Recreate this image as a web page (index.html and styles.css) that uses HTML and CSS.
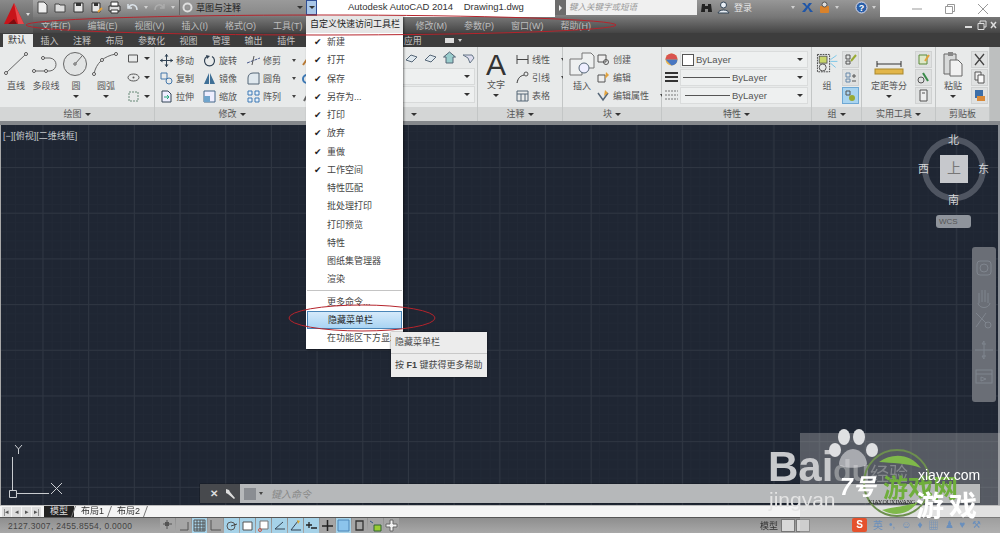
FILE: index.html
```html
<!DOCTYPE html>
<html lang="zh">
<head>
<meta charset="utf-8">
<title>Autodesk AutoCAD 2014</title>
<link rel="stylesheet" href="styles.css">
</head>
<body>
<div class="app">
  <div class="logo">
    <svg width="33" height="33" viewBox="0 0 33 33"><path d="M14 3 4 24h4l6-4 3 4h7z" fill="#c8141a"/><path d="M14 3l4 21h6z" fill="#e8474a"/><path d="M8 24l6-5 3 5z" fill="#7e0b0f"/><path d="M26 13h4l-2 3z" fill="#ddd"/></svg>
  </div>
  <div class="top-stack">
    <header class="titlebar">
      <div class="qat">
        <svg class="ic" viewBox="0 0 13 13"><path d="M2 1h6l3 3v8H2z" fill="#eee" stroke="#444"/></svg>
        <svg class="ic" viewBox="0 0 13 13"><path d="M1 3h4l1 1h5v7H1z" fill="#ddd" stroke="#444"/></svg>
        <svg class="ic" viewBox="0 0 13 13"><path d="M2 2h9v9H2z" fill="#e6e6e6" stroke="#333"/><path d="M4 2h5v3H4z" fill="#333"/></svg>
        <svg class="ic" viewBox="0 0 13 13"><path d="M2 2h8v9H2z" fill="#e6e6e6" stroke="#333"/><path d="M4 2h4v3H4z" fill="#333"/><path d="M8 11l4-4" stroke="#e3a23a" stroke-width="2"/></svg>
        <svg class="ic" viewBox="0 0 13 13"><path d="M1 5h11v5H1z" fill="#ddd" stroke="#333"/><path d="M3 1h7v4H3zM3 9h7v3H3z" fill="#fff" stroke="#333"/></svg>
        <svg class="ic" viewBox="0 0 13 13"><path d="M3 6c3-4 8-2 8 3M2 3v4h4" fill="none" stroke="#dbe3ea" stroke-width="1.500"/></svg>
        <i class="tiny-arrow"></i>
        <svg class="ic dim" viewBox="0 0 13 13"><path d="M10 6C7 2 2 4 2 9M11 3v4H7" fill="none" stroke="#bbb" stroke-width="1.500"/></svg>
        <i class="tiny-arrow"></i>
        <div class="workspace">
          <svg class="ic" viewBox="0 0 13 13"><circle cx="6.500" cy="6.500" r="4" fill="none" stroke="#ddd" stroke-width="2"/><circle cx="6.500" cy="6.500" r="1.500" fill="#999"/></svg>
          <span>草图与注释</span>
          <i class="drop dark"></i>
        </div>
        <div class="qat-more"><i class="drop dark"></i></div>
      </div>
      <div class="app-title">Autodesk AutoCAD 2014&nbsp;&nbsp;&nbsp;&nbsp;Drawing1.dwg</div>
      <div class="search-arrow"><i class="side-arrow"></i></div>
      <div class="search">键入关键字或短语</div>
      <div class="infocenter">
        <svg class="ic" viewBox="0 0 13 13"><path d="M2 3h3v8H1zM8 3h3l1 8H8zM5 5h3v3H5z" fill="#222"/></svg>
        <svg class="ic" viewBox="0 0 13 13"><circle cx="6.500" cy="4" r="3" fill="#e8eef5" stroke="#345"/><path d="M1 12c1-4 10-4 11 0z" fill="#e8eef5" stroke="#345"/></svg>
        <span class="login">登录</span>
        <i class="tiny-arrow push"></i>
        <svg class="ic" viewBox="0 0 13 13"><path d="M1 2l4 4-4 5h3l3-4 2 4h3L8 6l3-4H8L6 5 4 2z" fill="#1f56a8"/></svg>
        <svg class="ic" viewBox="0 0 13 13"><rect x="2" y="5" width="9" height="7" rx="1" fill="#d9822b"/><circle cx="6.500" cy="3.500" r="2.500" fill="#ddd" stroke="#555"/></svg>
        <i class="tiny-arrow"></i>
        <svg class="ic help" viewBox="0 0 13 13"><circle cx="6.500" cy="6.500" r="5.500" fill="#2a5fa8" stroke="#dde"/><text x="6.500" y="10" font-size="9" text-anchor="middle" fill="#fff" font-family="Liberation Sans" font-weight="700">?</text></svg>
        <i class="tiny-arrow"></i>
      </div>
      <div class="win-controls">
        <svg width="12" height="12" viewBox="0 0 12 12"><path d="M1 6h10" stroke="#999"/></svg>
        <svg width="12" height="12" viewBox="0 0 12 12"><path d="M1.500 3.500h7v7h-7zM3.500 3V1.500h7v7H9" fill="none" stroke="#999"/></svg>
        <svg width="12" height="12" viewBox="0 0 12 12"><path d="M1 1l10 10M11 1 1 11" stroke="#999"/></svg>
      </div>
    </header>
    <nav class="menubar">
      <span>文件(F)</span><span>编辑(E)</span><span>视图(V)</span><span>插入(I)</span><span>格式(O)</span><span>工具(T)</span><span class="menu-after-gap">修改(M)</span><span>参数(P)</span><span>窗口(W)</span><span>帮助(H)</span>
      <div class="doc-controls">
        <svg width="32" height="10" viewBox="0 0 32 10"><path d="M0 7h7" stroke="#ddd" stroke-width="2"/><path d="M13 3.500h6v6h-6zM15 3V1h6v6h-2" fill="none" stroke="#ddd"/><path d="M26 2l5 6M31 2l-5 6" stroke="#ddd" stroke-width="1.500"/></svg>
      </div>
    </nav>
  </div>
</div>
<div class="tabs">
  <span class="tab active">默认</span><span class="tab">插入</span><span class="tab">注释</span><span class="tab">布局</span><span class="tab">参数化</span><span class="tab">视图</span><span class="tab">管理</span><span class="tab">输出</span><span class="tab">插件</span><span class="tab tab-after-gap">应用</span>
  <span class="tab-icon"></span><i class="tiny-arrow"></i>
</div>
<section class="ribbon">
  <div class="panel p-draw">
    <div class="panel-body draw-body">
      <div class="big"><svg class="big-ic" viewBox="0 0 30 26"><path d="M5 22 25 3" stroke="#666" fill="none"/><circle cx="5" cy="22" r="1.500" fill="#fff" stroke="#555"/><circle cx="25" cy="3" r="1.500" fill="#fff" stroke="#555"/></svg><span>直线</span></div>
      <div class="big"><svg class="big-ic" viewBox="0 0 30 26"><path d="M3 20h16c8-1 8-12 0-13h-7" stroke="#666" fill="none"/><circle cx="3" cy="20" r="1.500" fill="#fff" stroke="#555"/><circle cx="15" cy="20" r="1.500" fill="#fff" stroke="#555"/><circle cx="12" cy="7" r="1.500" fill="#fff" stroke="#555"/></svg><span>多段线</span></div>
      <div class="big"><svg class="big-ic" viewBox="0 0 30 26"><circle cx="14" cy="13" r="11.500" fill="#e2e4e4" stroke="#666"/><path d="M14 13l7-8" stroke="#666"/><circle cx="14" cy="13" r="1.200" fill="#fff" stroke="#555"/></svg><span>圆</span><i class="drop dark"></i></div>
      <div class="big"><svg class="big-ic" viewBox="0 0 30 26"><path d="M3 23C5 12 13 5 25 3" stroke="#666" fill="none"/><circle cx="3" cy="23" r="1.500" fill="#fff" stroke="#555"/><circle cx="11" cy="9" r="1.500" fill="#fff" stroke="#555"/><circle cx="25" cy="3" r="1.500" fill="#fff" stroke="#555"/></svg><span>圆弧</span><i class="drop dark"></i></div>
      <div class="draw-small">
        <div class="mini"><svg class="ic" viewBox="0 0 13 13"><path d="M1.500 3h9v7h-9z" fill="none" stroke="#555"/></svg><i class="drop dark"></i></div>
        <div class="mini"><svg class="ic" viewBox="0 0 13 13"><ellipse cx="6.500" cy="6.500" rx="5.500" ry="3.500" fill="none" stroke="#555"/><circle cx="6.500" cy="6.500" r="1" fill="#555"/></svg><i class="drop dark"></i></div>
        <div class="mini"><svg class="ic" viewBox="0 0 13 13"><path d="M2 2h9v9H2z" fill="none" stroke="#687" stroke-dasharray="2 1"/></svg><i class="drop dark"></i></div>
      </div>
    </div>
    <div class="panel-title">绘图 <i class="drop dark"></i></div>
  </div>
  <div class="panel p-modify">
    <div class="panel-body modify-body">
      <div class="tool"><svg class="ic" viewBox="0 0 13 13"><path d="M6.500 0v13M0 6.500h13" stroke="#345"/><path d="M6.500 0l2 2.500h-4zM6.500 13l2-2.500h-4zM0 6.500l2.500-2v4zM13 6.500l-2.500-2v4z" fill="#345"/></svg>移动</div>
      <div class="tool"><svg class="ic" viewBox="0 0 13 13"><path d="M4 2.500a5 5 0 1 0 5 0" fill="none" stroke="#345" stroke-width="1.200"/><path d="M3 1l4 1-3 3z" fill="#345"/></svg>旋转</div>
      <div class="tool"><svg class="ic" viewBox="0 0 13 13"><path d="M0 9l13-5" stroke="#458" stroke-dasharray="3 1"/><path d="M7 2l-2 9" stroke="#555"/></svg>修剪<i class="tiny-arrow dark-a"></i></div>
      <div class="tool"><svg class="ic" viewBox="0 0 13 13"><path d="M10 1 3 11" stroke="#b97a35" stroke-width="2"/></svg></div>
      <div class="tool"><svg class="ic" viewBox="0 0 13 13"><path d="M1 1h6v6H1z" fill="none" stroke="#47a"/><circle cx="9" cy="9" r="3" fill="none" stroke="#47a"/></svg>复制</div>
      <div class="tool"><svg class="ic" viewBox="0 0 13 13"><path d="M6 1v11L1 12zM7 1v11l5 0z" fill="#3e6f96"/></svg>镜像</div>
      <div class="tool"><svg class="ic" viewBox="0 0 13 13"><path d="M1 12V6c0-3 2-5 5-5h6v11z" fill="#dfe8ee" stroke="#567"/></svg>圆角<i class="tiny-arrow dark-a"></i></div>
      <div class="tool"><svg class="ic" viewBox="0 0 13 13"><circle cx="7" cy="7" r="4" fill="none" stroke="#3c78b4" stroke-width="2"/></svg></div>
      <div class="tool"><svg class="ic" viewBox="0 0 13 13"><path d="M2 1h6l3 3v8H2z" fill="#eef" stroke="#345"/><path d="M4 7h5l-2-2m2 2-2 2" fill="none" stroke="#2a7"/></svg>拉伸</div>
      <div class="tool"><svg class="ic" viewBox="0 0 13 13"><path d="M1 1h11v11H1z" fill="#eef" stroke="#468"/><path d="M1 6h6v6H1z" fill="#6fa4cc"/></svg>缩放</div>
      <div class="tool"><svg class="ic" viewBox="0 0 13 13"><path d="M1 1h4v4H1zM8 1h4v4H8zM1 8h4v4H1zM8 8h4v4H8z" fill="#e6f0fa" stroke="#3c78b4"/></svg>阵列<i class="tiny-arrow dark-a"></i></div>
      <div class="tool"><svg class="ic" viewBox="0 0 13 13"><path d="M9 2 4 11" stroke="#666" stroke-width="2"/></svg></div>
    </div>
    <div class="panel-title">修改 <i class="drop dark"></i></div>
  </div>
  <div class="panel p-layer">
    <div class="panel-body layer-body">
      <div class="layer-icons">
        <svg class="ic" viewBox="0 0 13 13"><path d="M1 9l5-5 6 2-5 5z" fill="#dfe8ee" stroke="#567"/></svg>
        <svg class="ic" viewBox="0 0 13 13"><path d="M1 9l5-5 6 2-5 5z" fill="#dfe8ee" stroke="#567"/></svg>
        <svg class="ic" viewBox="0 0 13 13"><path d="M6.500 1l6 5H10v6H3V6H.5z" fill="#9cc" stroke="#567"/></svg>
        <svg class="ic" viewBox="0 0 13 13"><path d="M1 4h9l2 3-4 5-2-5z" fill="#dde" stroke="#678"/></svg>
      </div>
      <div class="combo"><i class="drop dark"></i></div>
      <div class="combo"><i class="drop dark"></i></div>
    </div>
    <div class="panel-title layer-title"><i class="drop dark"></i></div>
  </div>
  <div class="panel p-note">
    <div class="panel-body note-body">
      <div class="big text-tool"><b class="big-a">A</b><span>文字</span><i class="drop dark"></i></div>
      <div class="col">
        <div class="tool"><svg class="ic" viewBox="0 0 13 13"><path d="M1 2v9M12 2v9M1 6.500h11" stroke="#444"/></svg>线性<i class="tiny-arrow dark-a"></i></div>
        <div class="tool"><svg class="ic" viewBox="0 0 13 13"><path d="M1 12c1-5 3-7 7-8" fill="none" stroke="#333"/><circle cx="10" cy="3" r="2" fill="none" stroke="#555"/></svg>引线<i class="tiny-arrow dark-a"></i></div>
        <div class="tool"><svg class="ic" viewBox="0 0 13 13"><path d="M1 2h11v10H1zM1 5h11M5 5v7M9 5v7" fill="none" stroke="#567"/></svg>表格</div>
      </div>
    </div>
    <div class="panel-title">注释 <i class="drop dark"></i></div>
  </div>
  <div class="panel p-block">
    <div class="panel-body block-body">
      <div class="big"><svg class="big-ic" viewBox="0 0 30 26"><path d="M3 8h12V2h9l3 3v12H15v7H3z" fill="#eef0f0" stroke="#777"/><circle cx="17" cy="17" r="5" fill="#eef" stroke="#567"/></svg><span>插入</span></div>
      <div class="col">
        <div class="tool"><svg class="ic" viewBox="0 0 13 13"><path d="M1 2h8v7H1z" fill="#eee" stroke="#555"/><circle cx="9" cy="9" r="2.500" fill="none" stroke="#555"/></svg>创建</div>
        <div class="tool"><svg class="ic" viewBox="0 0 13 13"><path d="M1 4h7v7H1z" fill="#eee" stroke="#555"/><path d="M9 1l3 3-4 4z" fill="#e3a23a"/></svg>编辑</div>
        <div class="tool"><svg class="ic" viewBox="0 0 13 13"><path d="M1 4l5 7 5-7" fill="none" stroke="#567" stroke-width="1.500"/><path d="M8 1l3 3-4 3z" fill="#e3a23a"/></svg>编辑属性<i class="tiny-arrow dark-a"></i></div>
      </div>
    </div>
    <div class="panel-title">块 <i class="drop dark"></i></div>
  </div>
  <div class="panel p-prop">
    <div class="panel-body prop-body">
      <div class="prop-row"><svg class="ic" viewBox="0 0 13 13"><circle cx="6.500" cy="6.500" r="6" fill="#e9b44c"/><path d="M.5 6.500a6 6 0 0 1 12 0z" fill="#d9534f"/><path d="M.5 6.500h12a6 6 0 0 1-6 6z" fill="#4a78c2"/></svg><div class="pcombo"><b class="swatch"></b>ByLayer<i class="drop dark"></i></div></div>
      <div class="prop-row"><svg class="ic" viewBox="0 0 13 13"><path d="M0 2h13M0 6h13M0 10h13" stroke="#333" stroke-width="2"/></svg><div class="pcombo"><b class="pline"></b>ByLayer<i class="drop dark"></i></div></div>
      <div class="prop-row"><svg class="ic" viewBox="0 0 13 13"><path d="M0 2h13M0 6h13M0 10h13" stroke="#777" stroke-dasharray="2 1"/></svg><div class="pcombo"><b class="pline short"></b>ByLayer<i class="drop dark"></i></div></div>
    </div>
    <div class="panel-title">特性 <i class="drop dark"></i></div>
  </div>
  <div class="panel p-group">
    <div class="panel-body group-body">
      <div class="big"><svg class="big-ic" viewBox="0 0 30 26"><path d="M4 2h14v20H4z" fill="none" stroke="#333" stroke-dasharray="2 1"/><rect x="6" y="4" width="9" height="8" fill="#c8d66a" stroke="#555"/><circle cx="10" cy="17" r="4" fill="none" stroke="#444"/><path d="M19 8l7-5M19 10h8M19 12l6 5" stroke="#6cc1e8"/></svg><span>组</span></div>
      <div class="col tight">
        <div class="sq"><svg class="ic" viewBox="0 0 13 13"><path d="M2 2h4v4H2zM2 8h4v3H2z" fill="none" stroke="#555"/><path d="M7 8l5-6" stroke="#9a3" stroke-width="2"/></svg></div>
        <div class="sq"><svg class="ic" viewBox="0 0 13 13"><path d="M2 2h4v4H2zM2 8h4v3H2z" fill="none" stroke="#68a"/><path d="M8 5h4M10 3v4M8 10h4" stroke="#555"/></svg></div>
        <div class="sq on"><svg class="ic" viewBox="0 0 13 13"><path d="M2 2h4v4H2z" fill="none" stroke="#555"/><circle cx="8" cy="9" r="3" fill="#9a3"/></svg></div>
      </div>
    </div>
    <div class="panel-title">组 <i class="drop dark"></i></div>
  </div>
  <div class="panel p-util">
    <div class="panel-body util-body">
      <div class="big measure"><svg class="big-ic" viewBox="0 0 30 26"><path d="M3 7v6M27 7v6M3 10h24" stroke="#333"/><rect x="1" y="15" width="28" height="5" fill="#e2b64a" stroke="#a8872c"/></svg><span>定距等分</span><i class="drop dark"></i></div>
      <div class="col tight">
        <div class="sq"><svg class="ic" viewBox="0 0 13 13"><path d="M2 2h8v9H2z" fill="#dfe8c8" stroke="#5a8a3a"/><path d="M8 8l4-6" stroke="#e3a23a" stroke-width="2"/></svg></div>
        <div class="sq"><svg class="ic" viewBox="0 0 13 13"><circle cx="4" cy="9" r="3" fill="none" stroke="#555"/><path d="M6 2l5 8" stroke="#3a8a4a" stroke-width="2"/></svg></div>
        <div class="sq"><svg class="ic" viewBox="0 0 13 13"><path d="M3 1h7v11H3zM5 4h3" fill="#eee" stroke="#555"/></svg></div>
      </div>
    </div>
    <div class="panel-title">实用工具 <i class="drop dark"></i></div>
  </div>
  <div class="panel p-clip">
    <div class="panel-body clip-body">
      <div class="big"><svg class="big-ic" viewBox="0 0 30 26"><path d="M6 3h12v20H6z" fill="#d8dada" stroke="#666"/><path d="M10 1h5v4h-5z" fill="#888"/><path d="M12 9h8l4 4v12H12z" fill="#f1f1f1" stroke="#666"/></svg><span>粘贴</span><i class="drop dark"></i></div>
      <div class="col tight">
        <div class="sq"><svg class="ic" viewBox="0 0 13 13"><path d="M2 1l9 11M11 1 2 12" stroke="#444" stroke-width="1.300"/></svg></div>
        <div class="sq"><svg class="ic" viewBox="0 0 13 13"><path d="M2 1h6v8H2z" fill="#eee" stroke="#555"/><path d="M5 4h6v8H5z" fill="#f8f8f8" stroke="#555"/></svg></div>
        <div class="sq"><svg class="ic" viewBox="0 0 13 13"><path d="M2 1h8v8H2z" fill="#3c6ea8"/><path d="M4 7h8v5H4z" fill="#d98a3a"/></svg></div>
      </div>
    </div>
    <div class="panel-title">剪贴板</div>
  </div>
</section>
<main class="canvas">
  <div class="view-label">[−][俯视][二维线框]</div>
  <div class="cube">
    <svg width="72" height="72" viewBox="0 0 72 72"><circle cx="36" cy="36" r="29" fill="none" stroke="#4f5561" stroke-width="6"/></svg>
    <span class="cube-n">北</span><span class="cube-s">南</span><span class="cube-w">西</span><span class="cube-e">东</span>
    <div class="cube-face">上</div>
  </div>
  <div class="wcs">WCS</div>
  <div class="navbar">
    <svg width="22" height="150" viewBox="0 0 22 150" fill="none" stroke="#7f858e">
      <rect x="4" y="14" width="14" height="14" rx="3"/><circle cx="11" cy="21" r="4"/>
      <path d="M6 56V46M9 55V43M12 55V43M15 56V46M5 56c1 6 11 6 12 0"/>
      <circle cx="15" cy="78" r="3"/><path d="M3 66l10 10M13 66 3 80"/>
      <path d="M11 94v18M2 103h18M11 94l-2 3h4M11 112l-2-3h4"/>
      <rect x="3" y="123" width="16" height="13"/><path d="M3 127h16M8 130l5 2-5 2z"/>
    </svg>
  </div>
  <div class="ucs">
    <svg width="64" height="62" viewBox="0 0 64 62" fill="none" stroke="#c9ccd0">
      <path d="M11.500 17V50M8.500 50.500h7v7h-7zM15 53.500h33M50 43l11 11M61 43 50 54M14 5l3.500 4 3.500-4M17.500 9v5"/>
    </svg>
  </div>
  <div class="command">
    <div class="cmd-handle"><b class="cmd-x">✕</b><svg class="ic" viewBox="0 0 13 13"><path d="M2 2l3 1 1 2 5 6-1 1-6-5-2-1z" fill="#ddd"/></svg></div>
    <div class="cmd-input"><span class="cmd-btn"></span><i class="tiny-arrow dark-a"></i><span class="cmd-hint">键入命令</span></div>
  </div>
</main>
<div class="layout-tabs">
  <div class="nav-btns"><i>|◂</i><i>◂</i><i>▸</i><i>▸|</i></div>
  <span class="ltab current">模型</span><span class="ltab">布局1</span><span class="ltab">布局2</span>
</div>
<footer class="status">
  <span class="coords">2127.3007, 2455.8554, 0.0000</span>
  <div class="st-icons">
    <span class="st"><svg class="ic" viewBox="0 0 13 13"><path d="M6 1v9M2 5h9" stroke="#555"/><rect x="4" y="3" width="4" height="4" fill="#555"/></svg></span>
    <span class="st"><svg class="ic" viewBox="0 0 13 13"><path d="M3 11h8V3" fill="none" stroke="#555"/></svg></span>
    <span class="st on"><svg class="ic" viewBox="0 0 13 13"><path d="M1 1h11v11H1zM1 4h11M1 7h11M1 10h11M4 1v11M7 1v11M10 1v11" fill="none" stroke="#555"/></svg></span>
    <span class="st"><svg class="ic" viewBox="0 0 13 13"><path d="M2 1v10h10" fill="none" stroke="#555"/></svg></span>
    <span class="st on"><svg class="ic" viewBox="0 0 13 13"><circle cx="6" cy="7" r="4" fill="none" stroke="#555"/><path d="M6 7l6-2" stroke="#444"/></svg></span>
    <span class="st on"><svg class="ic" viewBox="0 0 13 13"><path d="M2 3h9v8H2z" fill="#fff" stroke="#555"/></svg></span>
    <span class="st on"><svg class="ic" viewBox="0 0 13 13"><path d="M3 2h8v8H3z" fill="#fff" stroke="#777"/><circle cx="3" cy="11" r="1.500" fill="none" stroke="#c54"/></svg></span>
    <span class="st on"><svg class="ic" viewBox="0 0 13 13"><path d="M10 3 2 10h10" fill="none" stroke="#345"/></svg></span>
    <span class="st on"><svg class="ic" viewBox="0 0 13 13"><path d="M9 2 2 11h10" fill="none" stroke="#345"/><path d="M8 1l3 1-2 3z" fill="#da3"/></svg></span>
    <span class="st on"><svg class="ic" viewBox="0 0 13 13"><path d="M1 6h6M4 3v6M6 9h6" stroke="#222" stroke-width="1.300"/></svg></span>
    <span class="st"><svg class="ic" viewBox="0 0 13 13"><path d="M6.500 1v11M1 7h11" stroke="#222" stroke-width="1.500"/></svg></span>
    <span class="st on"><svg class="ic" viewBox="0 0 13 13"><path d="M1 1h11v11H1z" fill="#8cc4ec" stroke="#4d86b8"/></svg></span>
    <span class="st"><svg class="ic" viewBox="0 0 13 13"><path d="M3 2h7v9H3z" fill="none" stroke="#333" stroke-width="1.300"/></svg></span>
    <span class="st"><svg class="ic" viewBox="0 0 13 13"><path d="M1 2l3 2" stroke="#358"/><path d="M5 6h7v6H5z" fill="#9c3" stroke="#363"/></svg></span>
    <span class="st"><svg class="ic" viewBox="0 0 13 13"><path d="M5 1h3v4h4v3H8v4H5V8H1V5h4z" fill="#f3f3f3" stroke="#666"/></svg></span>
  </div>
  <div class="st-right">
    <span class="model">模型</span>
    <span class="st-box"></span><span class="st-box"></span>
  </div>
</footer>

<div class="qat-menu">
  <div class="qm-head">自定义快速访问工具栏</div>
  <ul class="qm-list">
    <li class="chk">新建</li><li class="chk">打开</li><li class="chk">保存</li><li class="chk">另存为...</li><li class="chk">打印</li><li class="chk">放弃</li><li class="chk">重做</li><li class="chk">工作空间</li>
    <li>特性匹配</li><li>批处理打印</li><li>打印预览</li><li>特性</li><li>图纸集管理器</li><li>渲染</li>
    <li class="qm-sep"></li>
    <li>更多命令...</li><li class="hover">隐藏菜单栏</li><li>在功能区下方显示</li>
  </ul>
</div>
<div class="tooltip"><div class="tip-a">隐藏菜单栏</div><div class="tip-b">按 <b>F1</b> 键获得更多帮助</div></div>
<svg class="annot" width="1000" height="533" viewBox="0 0 1000 533">
  <ellipse cx="321" cy="25" rx="295" ry="10" fill="none" stroke="#b5242c" stroke-width="1"/>
  <ellipse cx="362" cy="318" rx="73" ry="13" fill="none" stroke="#b5242c" stroke-width="1"/>
</svg>
<div class="wm-box"></div>
<div class="wm-baidu">Bai<span class="wm-du">du</span><span class="wm-jy">经验</span></div>
<div class="wm-jingyan">jingyan</div>
<svg class="wm-paw" width="60" height="60" viewBox="0 0 60 60" fill="#dfe0e2"><ellipse cx="10" cy="25" rx="6" ry="7"/><ellipse cx="19" cy="12" rx="6" ry="8"/><ellipse cx="34" cy="12" rx="6" ry="8"/><ellipse cx="47" cy="25" rx="6" ry="7"/><path d="M28 24c-8 0-14 9-14 15 0 5 26 5 28 0 0-6-6-15-14-15z" opacity=".6"/></svg>
<svg class="wm-logo" width="95" height="95" viewBox="0 0 95 95"><circle cx="45" cy="45" r="33" fill="none" stroke="#6d8f4f" stroke-width="2"/><path d="M27 24c14-10 32-8 42 6-14-5-30-5-42-6zM30 72c13 7 26 5 36-8-10 4-26 5-36 8z" fill="#7fb84a"/></svg>
<div class="wm-seven">7号</div>
<div class="wm-green">游戏网</div>
<div class="wm-xia">xiayx.com</div>
<div class="wm-pinyin">XIAYOUXIWANG</div>
<div class="wm-game">游戏</div>
<div class="wm-tray"><b class="s-logo">S</b><span>英</span><span>•,</span><span>☺</span><span>♦</span><span>▦</span><span>♟</span><span>♥</span><span>⚒</span></div>
</body>
</html>
```
FILE: styles.css
```css
* { box-sizing: border-box; }
html, body { margin: 0; padding: 0; }
body {
  width: 1000px; height: 533px; overflow: hidden; position: relative;
  display: flex; flex-direction: column;
  font-family: "Liberation Sans", "Noto Sans CJK SC", sans-serif;
  font-size: 9px; color: #444; background: #1f2633;
  filter: blur(0.5px);
}
ul { list-style: none; margin: 0; padding: 0; }
.ic { width: 13px; height: 13px; flex: none; display: block; }
.dim { opacity: .6; }
.tiny-arrow { width: 0; height: 0; flex: none; border: 2px solid transparent; border-top: 3px solid #d0d0d0; border-bottom: 0; display: inline-block; }
.dark-a { border-top-color: #444; }
.drop { width: 0; height: 0; flex: none; border: 3px solid transparent; border-top: 3px solid #d8d8d8; border-bottom: 0; display: inline-block; }
.drop.dark { border-top-color: #333; }
.side-arrow { display: block; width: 0; height: 0; border: 3px solid transparent; border-left: 3px solid #eee; border-right: 0; }

.app { display: flex; height: 33px; background: #555; flex: none; }
.logo { width: 33px; flex: none; background: linear-gradient(#8a8a8a, #555); }
.top-stack { flex: 1; min-width: 0; display: flex; flex-direction: column; }
.titlebar { height: 17px; display: flex; flex: none; background: linear-gradient(#a8a8a8, #7b7b7b); }
.qat { width: 284px; flex: none; display: flex; align-items: center; gap: 5px; padding-left: 3px; height: 15px; }
.workspace { width: 130px; height: 15px; margin-left: -1px; display: flex; align-items: center; gap: 2px; padding: 0 3px 0 1px; color: #222; background: linear-gradient(#9a9a9a, #888); font-size: 9px; border-left: 1px solid #666; }
.workspace .drop { margin-left: auto; }
.qat-more { width: 11px; height: 15px; margin-left: -5px; background: #a9c7e8; border: 1px solid #2f4f96; display: flex; align-items: center; justify-content: center; }
.app-title { width: 238px; flex: none; height: 17px; background: #fff; color: #333; font-size: 9.500px; padding-left: 31px; line-height: 14px; white-space: nowrap; }
.search-arrow { width: 11px; flex: none; background: #6c6c6c; height: 15px; display: flex; align-items: center; justify-content: center; }
.search { width: 131px; flex: none; height: 15px; background: #f0f0f0; color: #999; font-style: italic; font-size: 8.500px; line-height: 15px; padding-left: 3px; }
.infocenter { width: 183px; flex: none; height: 17px; display: flex; align-items: center; gap: 4px; padding: 0 4px 2px 3px; background: linear-gradient(#979797, #777); }
.login { color: #e6e6e6; }
.push { margin-left: auto; margin-right: 2px; }
.help { margin-left: 12px; }
.win-controls { width: 120px; flex: none; height: 17px; background: #fff; display: flex; align-items: center; justify-content: space-around; padding: 0 0 0 20px; }
.menubar { height: 16px; flex: none; display: flex; align-items: center; gap: 17px; padding-left: 8px; color: #bdbdbd; background: linear-gradient(#777, #444); position: relative; white-space: nowrap; }
.menu-after-gap { margin-left: 96px; }
.doc-controls { position: absolute; right: 3px; top: 3px; }

.tabs { height: 14px; flex: none; display: flex; align-items: center; gap: 14.500px; padding-left: 8px; background: #3d3d3d; color: #c4c4c4; white-space: nowrap; }
.tab.active { background: #e8eaea; color: #333; margin: 1px -7px -1px -5px; padding: 0 7px 0 5px; height: 14px; line-height: 13px; }
.tab-after-gap { margin-left: 94px; }
.tab-icon { width: 9px; height: 5px; background: #ddd; margin-left: 9px; margin-right: -11px; }

.ribbon { height: 78px; flex: none; display: flex; background: #bdbfbf; border-bottom: 4px solid #85888c; }
.panel { display: flex; flex-direction: column; background: #e8eaea; border-right: 1px solid #c3c6c6; }
.panel-body { flex: 1; min-height: 0; display: flex; }
.panel-title { height: 14px; flex: none; background: #d4d6d6; color: #555; text-align: center; line-height: 13px; display: flex; align-items: center; justify-content: center; gap: 3px; }
.p-draw { width: 155px; } .p-modify { width: 155px; } .p-layer { width: 168px; } .p-note { width: 85px; }
.p-block { width: 99px; } .p-prop { width: 150px; } .p-group { width: 50px; } .p-util { width: 74px; } .p-clip { width: 54px; }
.ribbon::after { content: ""; flex: 1; }

.big { display: flex; flex-direction: column; align-items: center; color: #555; line-height: 12px; flex: none; }
.big .drop { margin-top: 3px; }
.big-ic { width: 30px; height: 26px; display: block; margin-bottom: 3px; }
.draw-body { padding: 4px 0 0 1px; }
.draw-small { display: flex; flex-direction: column; gap: 5px; margin-left: 4px; }
.mini { width: 26px; height: 14px; display: flex; align-items: center; gap: 4px; padding-left: 2px; }

.modify-body { display: grid; grid-template-columns: 43px 44px 53px 13px; grid-auto-rows: 18px; align-content: start; padding: 4px 0 0 5px; }
.tool { display: flex; align-items: center; gap: 3px; white-space: nowrap; color: #555; }
.tool .tiny-arrow { margin-left: 8px; }
.col { display: flex; flex-direction: column; gap: 5px; }

.layer-body { flex-direction: column; align-items: flex-end; padding: 4px 2px 0 0; gap: 1px; }
.layer-icons { display: flex; gap: 6px; height: 16px; }
.combo { width: 110px; height: 17px; display: flex; align-items: center; justify-content: flex-end; padding-right: 4px; background: #eef0f0; border: 1px solid #d8dada; }
.layer-title { justify-content: flex-end; padding-right: 60px; }

.note-body { padding: 3px 0 0 6px; gap: 8px; }
.text-tool { width: 24px; }
.big-a { font-size: 30px; font-weight: 400; line-height: 29px; color: #333; height: 29px; }
.note-body .col { padding-top: 2px; gap: 4px; }
.note-body .tool { height: 14px; }
.block-body { padding: 4px 0 0 4px; gap: 0; }
.block-body .col { gap: 4px; padding-top: 1px; }
.block-body .tool { height: 14px; }

.prop-body { flex-direction: column; gap: 1px; padding: 4px 3px 0 3px; }
.prop-row { display: flex; align-items: center; gap: 2px; height: 17px; }
.pcombo { flex: 1; height: 17px; display: flex; align-items: center; gap: 2px; padding: 0 4px 0 1px; background: #eef0f0; border: 1px solid #dadcdc; font-size: 9.500px; color: #555; }
.pcombo .drop { margin-left: auto; }
.swatch { width: 12px; height: 12px; background: #fff; border: 1px solid #555; }
.pline { width: 47px; height: 1px; background: #555; margin-left: 1px; }
.pline.short { width: 45px; margin-left: 3px; }

.group-body { padding: 4px 0 0 1px; gap: 1px; }
.group-body .big { width: 28px; }
.group-body .big-ic { width: 26px; }
.tight { gap: 1px; }
.sq { width: 17px; height: 17px; display: flex; align-items: center; justify-content: center; background: #dfe1e1; border: 1px solid #d0d2d2; }
.sq.on { background: #a9d4f0; border-color: #6ea8d4; }
.util-body { padding: 4px 0 0 4px; gap: 3px; }
.measure { width: 46px; }
.measure .big-ic { margin-top: 3px; margin-bottom: 0; }
.clip-body { padding: 4px 0 0 5px; gap: 6px; }
.clip-body .big { width: 24px; }

.canvas {
  flex: 1; min-height: 0; position: relative;
  background-color: #1f2633;
  background-image:
    linear-gradient(#2f3642 1px, transparent 1px),
    linear-gradient(90deg, #2f3642 1px, transparent 1px),
    linear-gradient(#222936 1px, transparent 1px),
    linear-gradient(90deg, #222936 1px, transparent 1px);
  background-size: 45.7px 45.7px, 45.7px 45.7px, 9.14px 9.14px, 9.14px 9.14px;
  background-position: 0 42px, 41.500px 0, 0 6px, 5px 0;
  border-left: 1px solid #a8a8a8; border-right: 2px solid #8a8f96;
}
.view-label { position: absolute; left: 2px; top: 4px; color: #c4c8cc; font-size: 9px; white-space: nowrap; }
.cube { position: absolute; left: 917px; top: 8px; width: 72px; height: 72px; color: #d4d6d8; }
.cube span { position: absolute; font-size: 11px; line-height: 12px; }
.cube-n { left: 30px; top: 1px; } .cube-s { left: 30px; top: 61px; } .cube-w { left: 0; top: 30px; } .cube-e { left: 60px; top: 30px; }
.cube-face { position: absolute; left: 22px; top: 22px; width: 28px; height: 28px; background: #c6c8cc; color: #777; font-size: 14px; text-align: center; line-height: 27px; }
.wcs { position: absolute; left: 935px; top: 90px; width: 35px; height: 13px; background: #8f949c; border-radius: 3px; color: #555; font-size: 8px; line-height: 13px; padding-left: 3px; }
.navbar { position: absolute; left: 971px; top: 122px; width: 24px; height: 155px; background: #6a6e76; border-radius: 3px; padding: 0 1px; }
.ucs { position: absolute; left: 0; top: 315px; }
.command { position: absolute; left: 199px; top: 359px; width: 780px; height: 19px; display: flex; box-shadow: 0 0 1px #000; }
.cmd-handle { width: 40px; flex: none; background: #47494d; display: flex; align-items: center; gap: 6px; padding-left: 10px; color: #ddd; }
.cmd-x { font-size: 10px; font-weight: 700; }
.cmd-input { flex: 1; background: #b6b8ba; display: flex; align-items: center; gap: 3px; padding-left: 4px; }
.cmd-btn { width: 12px; height: 12px; background: #8a8d92; }
.cmd-hint { margin-left: 5px; color: #888; font-style: italic; font-size: 10px; }

.layout-tabs { height: 12px; flex: none; display: flex; align-items: center; background: #f4f4f4; border-top: 1px solid #bbb; padding-left: 2px; white-space: nowrap; }
.nav-btns { display: flex; gap: 1px; width: 42px; }
.nav-btns i { width: 9px; font-style: normal; font-size: 7px; color: #555; background: #ddd; text-align: center; line-height: 10px; overflow: hidden; }
.ltab { color: #333; font-size: 9px; padding: 0 6px 0 7px; margin-left: 0; line-height: 11px; position: relative; }
.ltab::after { content: ""; position: absolute; right: 0; top: 0; bottom: 0; width: 1px; background: #777; transform: skewX(-20deg); }
.ltab.current { background: #222; color: #ddd; padding: 0 6px; width: 30px; }
.status { height: 16px; flex: none; display: flex; align-items: center; background: linear-gradient(#8e8e8e, #a8a8a8); border-top: 1px solid #555; }
.coords { width: 160px; flex: none; padding-left: 8px; color: #444; font-size: 8.500px; letter-spacing: .3px; white-space: nowrap; }
.st-icons { display: flex; gap: 1px; }
.st { width: 15px; height: 15px; display: flex; align-items: center; justify-content: center; background: #a5a5a5; }
.st.on { background: #a6d2e8; }
.st-right { margin-left: auto; display: flex; align-items: center; gap: 1px; width: 240px; }
.model { color: #333; margin-right: 2px; }
.st-box { width: 14px; height: 13px; background: #d8d8d8; border: 1px solid #777; }

.qat-menu { position: absolute; left: 306px; top: 16px; width: 97px; background: #fff; box-shadow: 1px 1px 2px rgba(0,0,0,.5); color: #444; padding-bottom: 2px; }
.qm-head { height: 17px; background: #e6e6e6; color: #222; line-height: 17px; padding-left: 4px; white-space: nowrap; }
.qm-list li { height: 18.250px; line-height: 18px; padding-left: 21px; white-space: nowrap; overflow: hidden; position: relative; }
.chk::before { content: "✔"; position: absolute; left: 8px; top: 0; color: #222; font-size: 9px; font-family: "DejaVu Sans", sans-serif; }
.qm-list .qm-sep { height: 1px; background: #c4c4c4; margin: 1px 1px 2px; padding: 0; }
.qm-list .hover { background: linear-gradient(#d5eafb, #a9d4f3); border: 1px solid #4a86b8; padding-left: 20px; margin: 0 1px; line-height: 16px; height: 18px; color: #222; }
.tooltip { position: absolute; left: 391px; top: 332px; width: 96px; height: 45px; background: #ececec; box-shadow: 0 0 2px rgba(0,0,0,.6); color: #444; padding: 0 4px; }
.tip-a { height: 22px; line-height: 21px; border-bottom: 1px solid #c8c8c8; margin: 0 -4px; padding: 0 4px; }
.tip-b { height: 23px; line-height: 23px; white-space: nowrap; }
.annot { position: absolute; left: 0; top: 0; pointer-events: none; }

.wm-box { position: absolute; left: 800px; top: 433px; width: 200px; height: 100px; background: rgba(190,190,190,.35); }
.wm-baidu { position: absolute; left: 768px; top: 443px; font-size: 42px; line-height: 48px; font-weight: 700; color: #c8c9cc; white-space: nowrap; }
.wm-du { color: #8f9296; font-size: 30px; font-weight: 700; }
.wm-jy { color: #85888d; font-size: 19px; font-weight: 400; }
.wm-jingyan { position: absolute; left: 769px; top: 488px; font-size: 21px; line-height: 24px; color: #e4e4e4; }
.wm-paw { position: absolute; left: 825px; top: 425px; }
.wm-logo { position: absolute; left: 852px; top: 438px; }
.wm-seven { position: absolute; left: 840px; top: 466px; font-size: 23px; line-height: 42px; font-weight: 700; color: #fff; font-style: italic; white-space: nowrap; }
.wm-green { position: absolute; left: 883px; top: 474px; font-size: 25px; line-height: 28px; font-weight: 700; color: #6fae3c; white-space: nowrap; }
.wm-xia { position: absolute; left: 918px; top: 467px; font-size: 14px; line-height: 16px; color: #fff; }
.wm-pinyin { position: absolute; left: 868px; top: 498px; font-size: 6px; line-height: 8px; color: #222; font-family: "Liberation Serif", serif; }
.wm-game { position: absolute; left: 916px; top: 492px; font-size: 28px; line-height: 30px; font-weight: 700; color: #fff; letter-spacing: 5px; white-space: nowrap; }
.wm-tray { position: absolute; left: 852px; top: 517px; height: 15px; width: 148px; display: flex; align-items: center; gap: 6px; color: #6a8fbc; font-size: 10px; white-space: nowrap; overflow: hidden; }
.s-logo { width: 15px; height: 14px; background: #e5522d; color: #fff; text-align: center; line-height: 14px; border-radius: 2px; flex: none; }
```
